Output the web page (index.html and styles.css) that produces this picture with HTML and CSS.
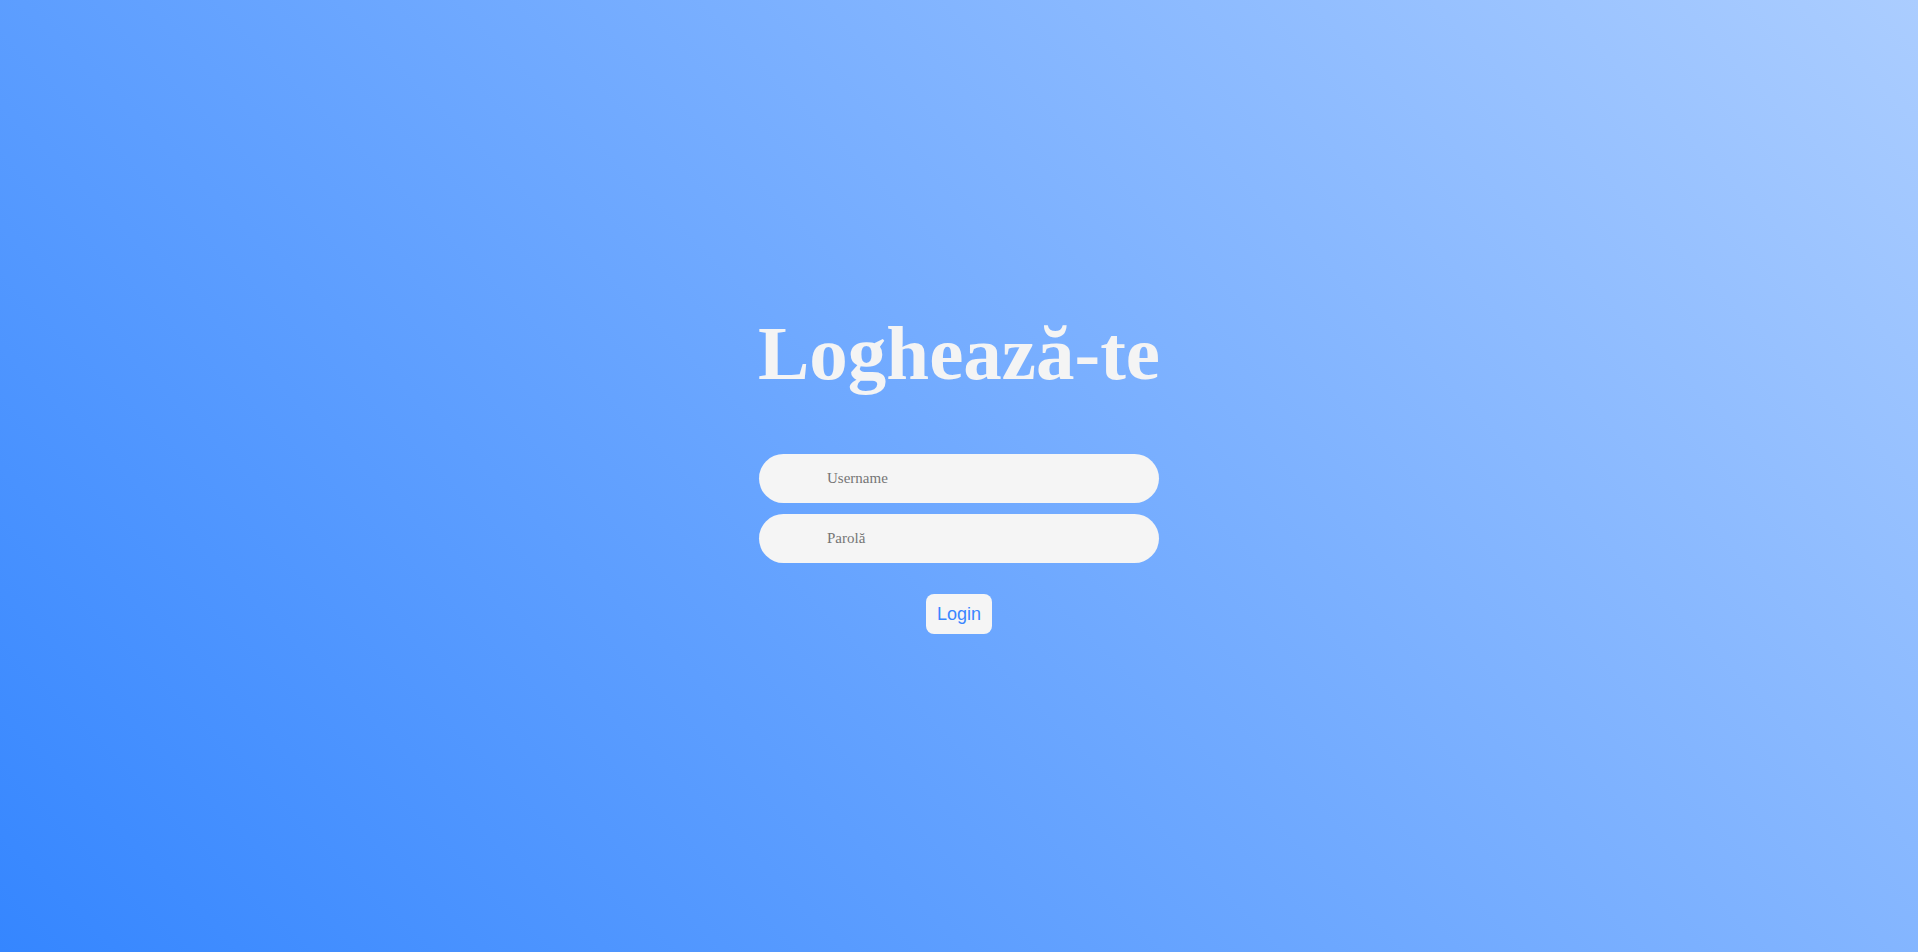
FILE: index.html
```html
<!DOCTYPE html>
<html lang="ro">
<head>
<meta charset="utf-8">
<title>Loghează-te</title>
<link rel="stylesheet" href="styles.css">
</head>
<body>
<main class="page">
  <form class="login">
    <h1 class="title">Loghează-te</h1>
    <input class="field" type="text" placeholder="Username">
    <input class="field" type="password" placeholder="Parolă">
    <button class="btn" type="button">Login</button>
  </form>
</main>
</body>
</html>
```

FILE: styles.css
```css
html, body {
  margin: 0;
  height: 100%;
}
body {
  background: linear-gradient(45deg, #3586ff 0%, #abcdff 100%);
  font-family: "Liberation Serif", "Times New Roman", serif;
}
.page {
  box-sizing: border-box;
  height: 100vh;
  padding-bottom: 8px;
  display: flex;
  align-items: center;
  justify-content: center;
}
.login {
  width: 400px;
  display: flex;
  flex-direction: column;
  align-items: center;
}
.title {
  margin: 0 0 57px;
  font-size: 77px;
  font-weight: bold;
  line-height: 87px;
  color: #f4f4f4;
  white-space: nowrap;
}
.field {
  box-sizing: border-box;
  width: 400px;
  height: 49px;
  margin: 0 0 11px;
  padding: 0 20px 0 68px;
  border: none;
  border-radius: 25px;
  background: #f5f5f5;
  font-family: "Liberation Serif", "Times New Roman", serif;
  font-size: 15px;
  color: #555;
  outline: none;
}
.field::placeholder {
  color: #757575;
}
.btn {
  margin-top: 20px;
  padding: 9px 11px;
  border: none;
  border-radius: 8px;
  background: #f5f5f5;
  color: #3a86ff;
  font-family: "Liberation Sans", Arial, sans-serif;
  font-size: 18px;
  line-height: 22px;
  cursor: pointer;
}
```
